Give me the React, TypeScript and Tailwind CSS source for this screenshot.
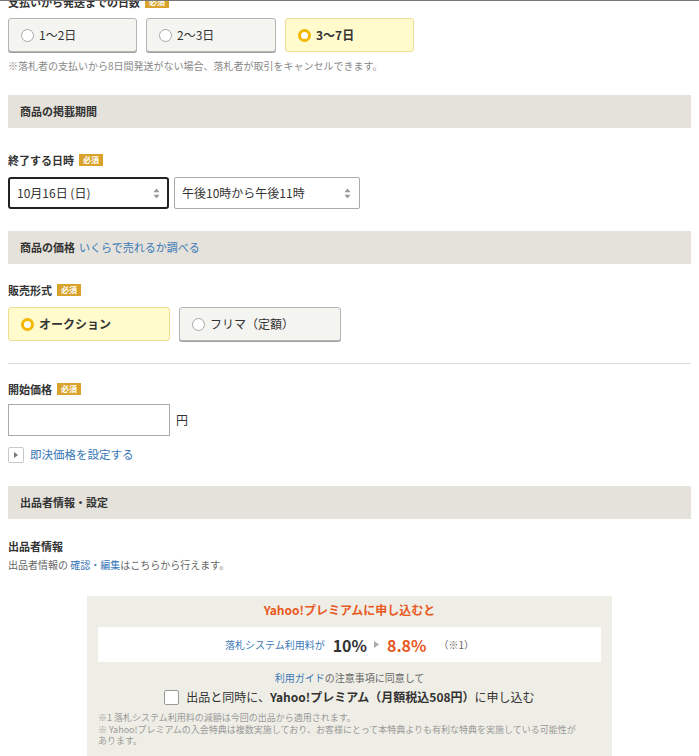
import React from "react";

const FONT = { fontFamily: '"Noto Sans CJK JP", "Noto Sans", sans-serif' };

function Badge() {
  return (
    <span className="inline-flex items-center justify-center h-[12px] px-[4px] bg-[#d9a32b] text-white text-[8px] font-bold leading-none ml-[5px]">
      必須
    </span>
  );
}

function Label({ children }: { children: React.ReactNode }) {
  return (
    <div className="flex items-center h-[16px] text-[11px] font-bold text-[#333] leading-[16px]">
      <span>{children}</span>
      <Badge />
    </div>
  );
}

function Radio({ selected }: { selected: boolean }) {
  return selected ? (
    <span className="w-[13px] h-[13px] rounded-full border-[3px] border-[#f4b700] bg-white shrink-0" />
  ) : (
    <span className="w-[13px] h-[13px] rounded-full border border-[#a9a9a9] bg-white shrink-0" />
  );
}

function RadioBox({
  label,
  selected,
  className,
}: {
  label: string;
  selected: boolean;
  className: string;
}) {
  return (
    <div
      className={
        "flex items-center h-[34px] rounded-[3px] pl-[12px] gap-[5px] text-[12px] text-[#333] " +
        (selected
          ? "bg-[#fffbcd] border border-[#eedd94] font-bold "
          : "bg-[#f4f4f0] border border-[#b5b5b5] shadow-[0_1px_0_#a0a0a0] ") +
        className
      }
    >
      <Radio selected={selected} />
      <span>{label}</span>
    </div>
  );
}

function Arrows() {
  return (
    <svg width="7" height="11" viewBox="0 0 7 11" className="shrink-0">
      <path d="M3.5 0.5 L6.5 4.2 L0.5 4.2 Z" fill="#999" />
      <path d="M3.5 10.5 L6.5 6.8 L0.5 6.8 Z" fill="#999" />
    </svg>
  );
}

function Bar({ children }: { children: React.ReactNode }) {
  return (
    <div className="h-[33px] bg-[#e4e2db] flex items-center pl-[12px] text-[11px] font-bold text-[#333]">
      {children}
    </div>
  );
}

export default function App() {
  return (
    <div className="w-[699px] h-[756px] bg-white border-t border-[#777] overflow-hidden" style={FONT}>
      <div className="px-[8px]">
        {/* 支払いから発送までの日数 */}
        <div className="-mt-[7px]">
          <Label>支払いから発送までの日数</Label>
        </div>
        <div className="flex gap-[9px] mt-[8px]">
          <RadioBox label="1〜2日" selected={false} className="w-[129px]" />
          <RadioBox label="2〜3日" selected={false} className="w-[130px]" />
          <RadioBox label="3〜7日" selected={true} className="w-[129px]" />
        </div>
        <div className="mt-[7px] text-[10px] leading-[14px] text-[#888]">
          ※落札者の支払いから8日間発送がない場合、落札者が取引をキャンセルできます。
        </div>

        <div className="mt-[22px]">
          <Bar>商品の掲載期間</Bar>
        </div>

        <div className="mt-[24px]">
          <Label>終了する日時</Label>
        </div>
        <div className="flex gap-[5px] mt-[9px]">
          <div className="w-[161px] h-[32px] border-2 border-[#222] rounded-[3px] flex items-center justify-between pl-[7px] pr-[7px] text-[12px] text-[#333]">
            <span>10月16日 (日)</span>
            <Arrows />
          </div>
          <div className="w-[186px] h-[32px] border border-[#aaa] rounded-[2px] flex items-center justify-between pl-[7px] pr-[8px] text-[12px] text-[#333]">
            <span>午後10時から午後11時</span>
            <Arrows />
          </div>
        </div>

        <div className="mt-[22px]">
          <Bar>
            商品の価格
            <span className="ml-[4px] font-normal text-[#3a78b6]">いくらで売れるか調べる</span>
          </Bar>
        </div>

        <div className="mt-[18px]">
          <Label>販売形式</Label>
        </div>
        <div className="flex gap-[9px] mt-[9px]">
          <RadioBox label="オークション" selected={true} className="w-[162px]" />
          <RadioBox label="フリマ（定額）" selected={false} className="w-[162px]" />
        </div>

        <div className="mt-[22px] h-px bg-[#dcdcdc]" />

        <div className="mt-[17px]">
          <Label>開始価格</Label>
        </div>
        <div className="flex items-center gap-[6px] mt-[7px]">
          <div className="w-[162px] h-[32px] border border-[#aaa] bg-white" />
          <span className="text-[12px] text-[#333]">円</span>
        </div>

        <div className="mt-[11px] flex items-center gap-[6px] h-[16px]">
          <span className="w-[16px] h-[16px] border border-[#c8c8c8] rounded-[2px] flex items-center justify-center bg-white">
            <svg width="4" height="6" viewBox="0 0 4 6">
              <path d="M0 0 L4 3 L0 6 Z" fill="#777" />
            </svg>
          </span>
          <span className="text-[11.5px] text-[#3a78b6]">即決価格を設定する</span>
        </div>

        <div className="mt-[23px]">
          <Bar>出品者情報・設定</Bar>
        </div>

        <div className="mt-[19px] h-[16px] leading-[16px] text-[11px] font-bold text-[#333]">
          出品者情報
        </div>
        <div className="mt-[4px] text-[10px] leading-[14px] text-[#666]">
          出品者情報の <span className="text-[#3a78b6]">確認・編集</span>はこちらから行えます。
        </div>

        {/* Premium box */}
        <div className="mt-[24px] ml-[79px] w-[525px] bg-[#efeee6] px-[11px] pt-[6px] pb-[20px]">
          <div className="text-center text-[12px] leading-[16px] font-bold text-[#e8591f]">
            Yahoo!プレミアムに申し込むと
          </div>
          <div className="mt-[9px] h-[35px] bg-white flex items-center justify-center">
            <span className="text-[10px] text-[#3a78b6]">落札システム利用料が</span>
            <span className="ml-[8px] text-[16px] font-bold text-[#333]">10%</span>
            <svg width="5" height="7" viewBox="0 0 5 7" className="ml-[7px]">
              <path d="M0 0 L5 3.5 L0 7 Z" fill="#aaa" />
            </svg>
            <span className="ml-[8px] text-[16px] font-bold text-[#e8591f]">8.8%</span>
            <span className="ml-[12px] text-[10px] text-[#666]">（※1）</span>
          </div>
          <div className="mt-[9px] text-center text-[10px] leading-[14px] text-[#666]">
            <span className="text-[#3a78b6]">利用ガイド</span>の注意事項に同意して
          </div>
          <div className="mt-[3px] flex items-center justify-center gap-[7px] h-[18px]">
            <span className="w-[15px] h-[15px] border border-[#999] rounded-[2px] bg-white" />
            <span className="text-[12px] text-[#333]">
              出品と同時に、<span className="font-bold">Yahoo!プレミアム（月額税込508円）</span>に申し込む
            </span>
          </div>
          <div className="mt-[6px] pr-[20px] text-[9px] leading-[11.5px] text-[#999]">
            <div>※1 落札システム利用料の減額は今回の出品から適用されます。</div>
            <div>
              ※ Yahoo!プレミアムの入会特典は複数実施しており、お客様にとって本特典よりも有利な特典を実施している可能性があります。
            </div>
          </div>
        </div>
      </div>
    </div>
  );
}
